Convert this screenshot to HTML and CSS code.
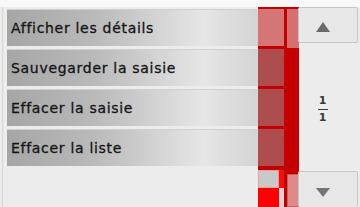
FILE: index.html
```html
<!DOCTYPE html>
<html lang="fr">
<head>
  <meta charset="UTF-8">
  <title>Options</title>
<link rel="stylesheet" href="styles.css">
</head>
<body>
<div class="screen">
  <div class="topbar"></div>
  <div class="main">
    <ul class="menu">
      <li class="item">Afficher les détails</li>
      <li class="item">Sauvegarder la saisie</li>
      <li class="item">Effacer la saisie</li>
      <li class="item">Effacer la liste</li>
    </ul>

    <!-- red scroll track -->
    <div class="track">
      <div class="track-l">
        <div class="tline"></div>
        <div class="tseg first"></div>
        <div class="tline gap"></div>
        <div class="tseg"></div>
        <div class="tline gap"></div>
        <div class="tseg"></div>
        <div class="tline gap"></div>
        <div class="tseg"></div>
        <div class="tline end"></div>
        <div class="tfoot">
          <div class="sq grey"></div>
          <div class="sq red"></div>
          <div class="sq red wide"></div>
          <div class="sq pale"></div>
        </div>
      </div>
      <div class="track-r">
        <div class="rtop"></div>
        <div class="rbody"></div>
        <div class="rfoot"></div>
      </div>
    </div>

    <div class="side">
      <div class="btn up"><span class="arrow"></span></div>
      <div class="page">
        <span>1</span>
        <span class="bar"></span>
        <span>1</span>
      </div>
      <div class="btn down"><span class="arrow"></span></div>
    </div>
  </div>
</div>
</body>
</html>
```

FILE: styles.css
```css
body {
  margin: 0;
  background: #ececec;
  font-family: "DejaVu Sans", Verdana, sans-serif;
}

.screen {
  width: 360px;
  height: 207px;
  display: flex;
  flex-direction: column;
  background: #ececec;
  overflow: hidden;
}

.topbar {
  height: 7px;
  background: #f8f8f8;
}

.main {
  flex: 1;
  display: flex;
}

/* menu list */
.menu {
  list-style: none;
  margin: 0;
  padding: 2px 0 0 4px;
  width: 253px;
  display: flex;
  flex-direction: column;
  gap: 3px;
  border-left: 1px solid #d6d6d6;
  margin-left: 2px;
  box-sizing: content-box;
}

.item {
  height: 37px;
  line-height: 36px;
  padding-left: 4px;
  font-size: 14px;
  letter-spacing: 0.7px;
  color: #151515;
  -webkit-text-stroke: 0.3px #151515;
  background: linear-gradient(90deg, #a6a6a6 0%, #bababa 35%, #e6e6e6 78%, #d4d4d4 100%);
  border-top: 1px solid #d0d0d0;
  box-sizing: border-box;
  white-space: nowrap;
}

/* red track */
.track {
  width: 41px;
  display: flex;
}

.track-l {
  width: 26px;
  display: flex;
  flex-direction: column;
}

.tline {
  height: 2px;
  background: #c20000;
}
.tline.gap { height: 3px; }
.tline.end { height: 4px; }

.tseg {
  height: 37px;
  background: #ad4d4d;
}
.tseg.first {
  background: #d57676;
}

.tfoot {
  flex: 1;
  display: grid;
  grid-template-columns: 21px 5px;
  grid-template-rows: 18px 1fr;
}

.sq.grey { background: #c9c9c9; border: 1px solid #e6a0a0; }
.sq.red { background: #ff0a0a; }
.sq.red.wide { background: #ff0000; }
.sq.pale { background: #d6d6d6; }

.track-r {
  width: 15px;
  display: flex;
  flex-direction: column;
}

.rtop {
  height: 39px;
  background: #d67070;
  border-left: 3px solid #c40000;
  border-top: 2px solid #c40000;
}

.rbody {
  height: 124px;
  background: #c60000;
}

.rfoot {
  flex: 1;
  background: #dc8a8a;
  border-left: 3px solid #c40000;
  border-top: 2px solid #c40000;
  box-shadow: inset 0 0 0 1px #c46060;
}

/* right side: pager */
.side {
  width: 62px;
  display: flex;
  flex-direction: column;
  justify-content: space-between;
  align-items: flex-start;
}

.btn {
  width: 60px;
  background: #e7e7e7;
  border: 1px solid #c6c6c6;
  border-radius: 2px;
  box-sizing: border-box;
  display: flex;
  align-items: center;
  justify-content: center;
  padding-right: 10px;
}
.btn.up { height: 36px; margin-left: -1px; }
.btn.down { height: 36px; margin-left: -1px; border-bottom: none; }

.arrow {
  width: 0;
  height: 0;
  border-left: 7px solid transparent;
  border-right: 7px solid transparent;
}
.up .arrow { border-bottom: 10px solid #6a6a6a; margin-top: 3px; }
.down .arrow { border-top: 9px solid #747474; margin-top: 5px; }

.page {
  display: flex;
  flex-direction: column;
  align-items: center;
  width: 48px;
  font-size: 11px;
  font-weight: bold;
  color: #3a3a3a;
  line-height: 10px;
  margin-top: 4px;
}

.page .bar {
  width: 10px;
  height: 1px;
  background: #3a3a3a;
  margin: 3px 0;
}
```
